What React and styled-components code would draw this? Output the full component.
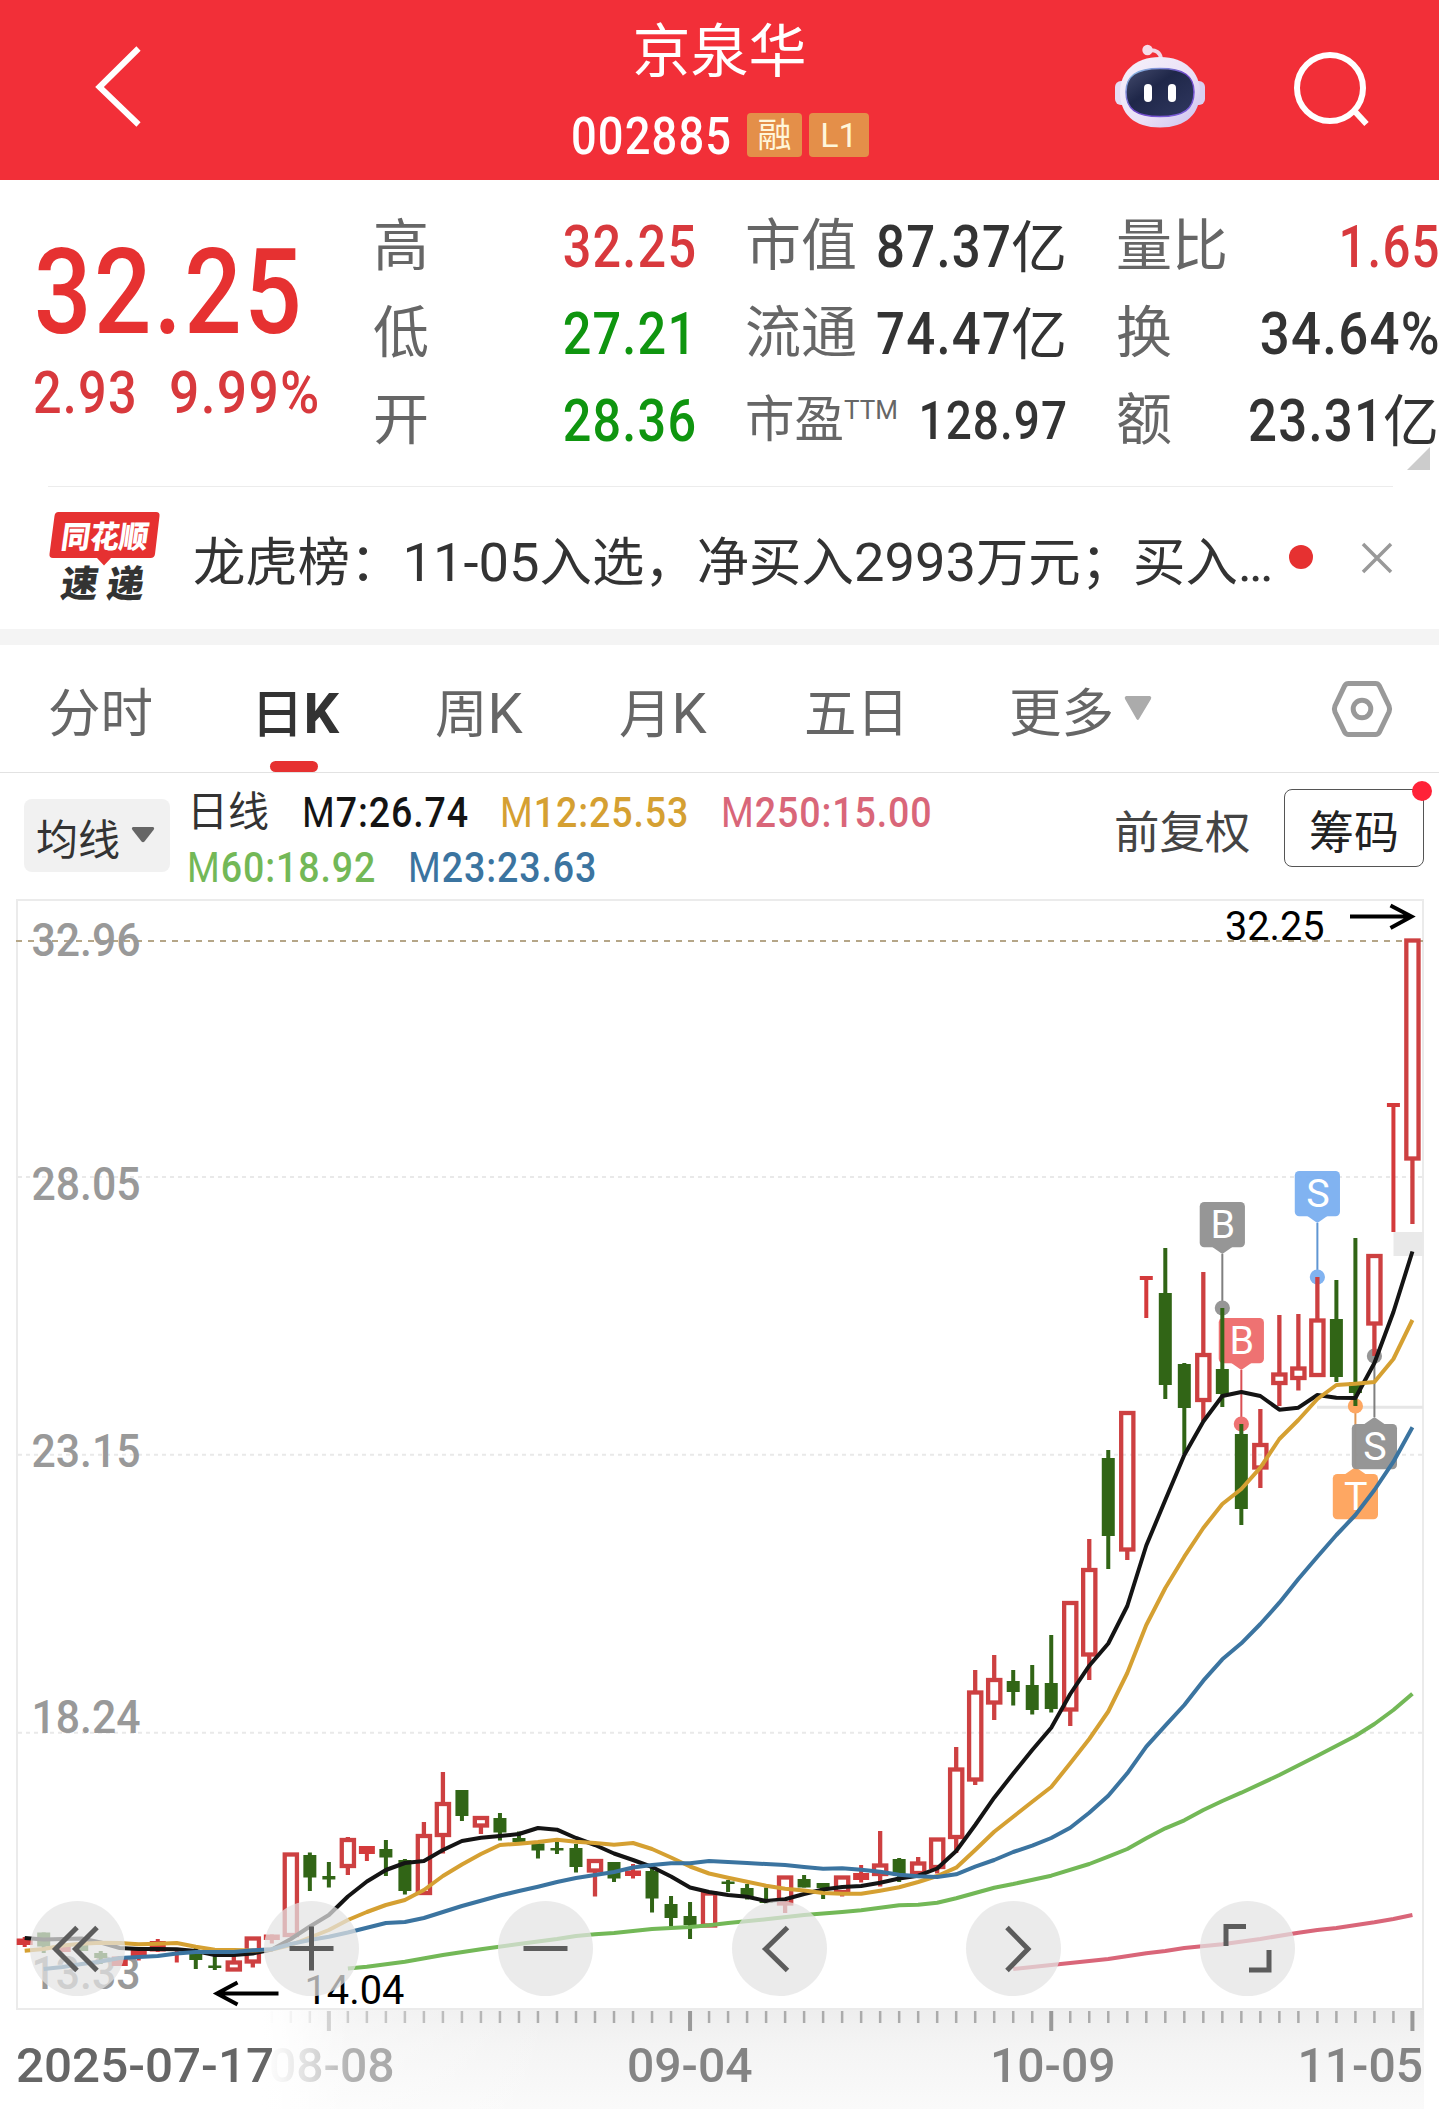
import React from "react";
import styled, { createGlobalStyle } from "styled-components";

const fontStack = `Roboto, "Noto Sans CJK SC", sans-serif`;

const c = {
  brand: "#f22f38",
  red: "#d8393d",
  green: "#0f950f",
  ink: "#333333",
  label: "#666666",
  ma7: "#141414",
  ma12: "#d5a032",
  ma23: "#3b74a0",
  ma60: "#73b857",
  ma250: "#d96679",
};

const GlobalStyle = createGlobalStyle`
  * { box-sizing: border-box; }
  body { margin: 0; background: #fff; }
`;

const Page = styled.main`
  width: 1439px;
  height: 2109px;
  overflow: hidden;
  background: #fff;
  color: ${c.ink};
  font-family: ${fontStack};
  display: flex;
  flex-direction: column;
  white-space: nowrap;
`;

/* Condensed numerals in the style of a DIN face */
const Num = styled.span`
  display: inline-block;
  font-size: ${(p) => p.$size}px;
  font-weight: ${(p) => p.$weight || 500};
  color: ${(p) => p.$color || "inherit"};
  letter-spacing: 0.024em;
  margin-right: -0.024em;
  margin-left: ${(p) => (p.$origin === "right" ? "-0.35em" : "0")};
  transform: scaleX(${(p) => p.$scale || 0.85});
  transform-origin: ${(p) => p.$origin || "left"} center;
`;

/* ---------- header ---------- */
const Header = styled.header`
  height: 180px;
  flex: none;
  background: ${c.brand};
  display: grid;
  grid-template-columns: 480px 479px 480px;
  color: #fff;
`;
const HeaderSide = styled.div`
  display: flex;
  align-items: flex-start;
  padding-left: ${(p) => p.$left}px;
  padding-top: ${(p) => p.$top}px;
  gap: 87px;
`;
const HeaderTitle = styled.div`
  display: flex;
  flex-direction: column;
  align-items: center;
`;
const StockName = styled.h1`
  margin: 0;
  font-size: 58px;
  font-weight: 400;
  line-height: 104px;
`;
const CodeRow = styled.div`
  display: flex;
  width: 299px;
  margin-top: 7px;
  margin-left: 2px;
  line-height: 51px;
`;
const Code = styled.div`
  width: 176px;
`;
const Badge = styled.span`
  width: ${(p) => p.$w}px;
  height: 44px;
  margin-top: 2px;
  margin-right: 7px;
  flex: none;
  border-radius: 4px;
  background: #e48f49;
  color: #fff6da;
  font-size: 34px;
  line-height: 45px;
  text-align: center;
`;

/* ---------- quote ---------- */
const Quote = styled.section`
  height: 306px;
  flex: none;
  display: grid;
  grid-template-columns: 373px 1066px;
  position: relative;
`;
const PriceBlock = styled.div`
  padding-left: 33px;
  color: ${c.red};
`;
const Price = styled.div`
  height: 140px;
  margin-top: 42px;
  padding-left: 1px;
  line-height: 140px;
  color: #e63131;
`;
const Change = styled.div`
  display: flex;
  line-height: 70px;
  margin-top: -4px;
`;
const ChangeCell = styled.div`
  width: ${(p) => p.$w}px;
`;
const Stats = styled.div`
  display: grid;
  grid-template-columns: 323px 322px 323px;
  grid-auto-rows: 87px;
  column-gap: 49px;
  padding-top: 23px;
`;
const Stat = styled.div`
  display: flex;
  justify-content: space-between;
  line-height: 87px;
  font-size: ${(p) => (p.$small ? 49.5 : 56)}px;
`;
const StatLabel = styled.span`
  color: ${c.label};
`;
const Sup = styled.sup`
  font-size: 26px;
  line-height: 0;
  vertical-align: 18px;
`;
const Corner = styled.i`
  position: absolute;
  left: 1407px;
  top: 267px;
  border-style: solid;
  border-width: 0 0 23px 23px;
  border-color: transparent transparent #cccccc transparent;
`;

/* ---------- news ---------- */
const News = styled.section`
  height: 143px;
  flex: none;
  margin: 0 46px 0 48px;
  border-top: 1px solid #ececec;
  display: flex;
`;
const NewsLogo = styled.div`
  width: 145px;
  padding-top: 23px;
  svg { overflow: visible; }
`;
const NewsText = styled.div`
  width: 1093px;
  font-size: 52.4px;
  line-height: 151px;
`;
const NewsNum = styled.span`
  font-size: 54.3px;
`;
const Ellipsis = styled.span`
  letter-spacing: -2.7px;
`;
const NewsDot = styled.i`
  width: 24px;
  height: 24px;
  margin: 58px 0 0 4px;
  border-radius: 50%;
  background: #e63131;
`;
const CloseBox = styled.div`
  margin: 55px 0 0 48px;
`;
const Band = styled.div`
  height: 16px;
  flex: none;
  background: #f4f4f4;
`;

/* ---------- period tabs ---------- */
const Tabs = styled.nav`
  height: 128px;
  flex: none;
  border-bottom: 1px solid #e2e2e2;
  display: flex;
  align-items: stretch;
  padding-left: 48px;
`;
const Tab = styled.div`
  width: ${(p) => p.$w}px;
  color: ${(p) => (p.$active ? c.ink : c.label)};
  font-size: 52.5px;
  font-weight: ${(p) => (p.$active ? 500 : 400)};
  line-height: 138px;
  display: flex;
  flex-direction: column;
  &::after {
    content: "";
    display: ${(p) => (p.$active ? "block" : "none")};
    width: 48px;
    height: 12px;
    margin: -23px 0 0 19px;
    border-radius: 6px;
    background: #e63131;
  }
`;
const K = styled.span`
  display: inline-block;
  font-weight: ${(p) => (p.$bold ? 700 : 400)};
  font-size: 56px;
`;
const Caret = styled.svg`
  display: block;
  flex: none;
`;
const MoreTab = styled.div`
  width: 321px;
  display: flex;
  gap: 10px;
  color: ${c.label};
  font-size: 52.5px;
  line-height: 138px;
  ${Caret} { margin-top: 51px; }
`;
const GearBox = styled.div`
  padding-top: 34px;
`;

/* ---------- moving-average legend ---------- */
const LegendBar = styled.section`
  height: 124px;
  flex: none;
  display: flex;
  padding-left: 24px;
`;
const MaButton = styled.div`
  width: 146px;
  height: 73px;
  margin-top: 26px;
  padding-left: 12px;
  border-radius: 8px;
  background: #f1f1f1;
  display: flex;
  gap: 11px;
  font-size: 42px;
  line-height: 83px;
  ${Caret} { margin-top: 28px; }
`;
const LegendRows = styled.div`
  width: 927px;
  margin-left: 17px;
  padding-top: 12px;
`;
const LegendRow = styled.div`
  display: flex;
  height: 55px;
  line-height: 55px;
  font-size: 41px;
`;
const LegendCell = styled.div`
  width: ${(p) => p.$w}px;
  color: ${(p) => p.$color};
`;
const MaLetter = styled.span`
  font-weight: 400;
`;
const Adjust = styled.div`
  width: 170px;
  font-size: 45.5px;
  line-height: 122px;
  color: #444444;
`;
const ChipButton = styled.div`
  position: relative;
  width: 140px;
  height: 78px;
  margin-top: 16px;
  border: 1.5px solid #555555;
  border-radius: 8px;
  font-size: 45px;
  line-height: 87px;
  text-align: center;
  color: #222222;
`;
const ChipDot = styled.i`
  position: absolute;
  right: -9px;
  top: -9px;
  width: 20px;
  height: 20px;
  border-radius: 50%;
  background: #ff2238;
`;

/* ---------- chart ---------- */
const ChartArea = styled.section`
  position: relative;
  height: 1113px;
  flex: none;
`;
const ChartSvg = styled.svg`
  display: block;
  font-family: ${fontStack};
`;
const Controls = styled.div`
  position: absolute;
  left: 30px;
  top: 1004px;
  display: flex;
  gap: 139px;
`;
const RoundButton = styled.div`
  width: 95px;
  height: 95px;
  border-radius: 50%;
  background: rgba(228, 228, 228, 0.725);
  svg { display: block; }
`;
const AxisArea = styled.section`
  position: relative;
  height: 99px;
  flex: none;
  width: 1424px;
  background: linear-gradient(180deg, #eeeeee 0, #f4f4f4 35px, #fafafa 99px);
`;
const AxisFade = styled.div`
  position: absolute;
  inset: 0;
  background:
    linear-gradient(90deg, #fff 0, #fff 262px, rgba(255,255,255,.86) 280px, rgba(255,255,255,.62) 300px, rgba(255,255,255,.3) 325px, rgba(255,255,255,0) 350px),
    linear-gradient(90deg, #fff 0, rgba(255,255,255,0) 560px);
`;
const FirstDate = styled.svg`
  position: absolute;
  left: 0;
  top: 0;
  font-family: ${fontStack};
`;

/* kind: r = hollow rise, f = solid rise, g = fall; then body top, body bottom, high, low */
const candles = [
  ["f", 1938.5, 1945, 1937, 1947], ["g", 1932.5, 1946.5, 1932.5, 1953], ["f", 1945, 1952, 1940, 1952],
  ["g", 1944, 1951, 1944, 1951], ["g", 1953, 1958, 1951, 1964], ["f", 1956.5, 1966, 1956, 1966],
  ["f", 1950, 1958, 1949, 1960.5], ["f", 1941, 1951.5, 1939, 1952], ["f", 1948, 1950, 1948, 1962.5],
  ["g", 1954, 1960, 1948, 1969], ["g", 1965.5, 1968, 1956, 1970], ["r", 1960.5, 1971.5, 1948.5, 1971.5],
  ["r", 1936.5, 1963.5, 1936.5, 1967.5], ["f", 1934.5, 1940, 1934.5, 1943.5], ["r", 1852.5, 1937, 1852.5, 1937],
  ["g", 1855, 1877.5, 1852.5, 1891], ["g", 1876, 1879.5, 1862, 1887.5], ["r", 1838, 1868, 1837, 1875],
  ["f", 1846, 1854, 1846, 1861], ["g", 1849, 1857.5, 1840, 1876], ["g", 1860, 1891, 1859, 1894.5],
  ["r", 1834, 1895, 1822, 1895], ["r", 1802, 1837, 1772, 1853.5], ["g", 1790, 1816, 1790, 1821],
  ["r", 1816, 1827.5, 1816, 1834], ["g", 1818, 1832.5, 1813, 1840.5], ["g", 1838, 1842, 1831.5, 1842],
  ["g", 1843.5, 1850.5, 1843, 1858.5], ["g", 1848, 1850.5, 1838, 1854], ["g", 1848, 1867, 1844, 1872.5],
  ["r", 1859, 1872.5, 1859, 1896.5], ["g", 1862, 1878.5, 1862, 1882], ["f", 1870.5, 1876, 1864, 1878.5],
  ["g", 1871, 1898.5, 1868, 1912.5], ["g", 1904, 1918, 1896, 1926.5], ["g", 1916, 1925, 1902, 1939],
  ["r", 1891.5, 1927.5, 1891.5, 1927.5], ["g", 1881.5, 1884, 1880, 1892], ["g", 1888, 1897, 1884, 1899.5],
  ["g", 1901, 1903, 1887.5, 1903.5], ["r", 1875.5, 1905.5, 1875.5, 1913], ["g", 1879, 1887.5, 1875, 1887.5],
  ["g", 1883, 1888, 1883, 1899], ["r", 1875.5, 1894, 1875.5, 1896.5], ["f", 1873, 1880, 1865, 1882.5],
  ["r", 1863.5, 1876, 1831, 1886.5], ["g", 1859, 1875.5, 1858, 1882], ["r", 1861.5, 1875, 1857, 1875],
  ["r", 1837.5, 1869, 1837.5, 1873.5], ["r", 1767.5, 1839, 1747, 1853], ["r", 1690.5, 1781.5, 1670, 1785],
  ["r", 1678, 1704.5, 1655, 1720], ["g", 1681, 1692, 1670, 1705.5], ["g", 1685, 1710, 1665, 1714.5],
  ["g", 1683, 1709, 1635, 1712.5], ["r", 1601, 1711.5, 1601, 1726], ["r", 1568, 1656.5, 1539, 1680],
  ["g", 1458, 1536, 1450, 1569], ["r", 1411, 1551.5, 1411, 1560], ["f", 1276, 1280, 1276, 1318],
  ["g", 1293, 1385, 1248, 1399], ["g", 1364, 1408, 1363, 1454], ["r", 1353, 1402, 1272, 1421],
  ["g", 1369, 1394, 1308, 1407], ["g", 1434, 1509, 1424, 1525], ["r", 1443, 1469.5, 1409, 1488],
  ["r", 1372.5, 1385, 1315, 1406], ["r", 1366.5, 1380, 1314, 1390.5], ["r", 1318.5, 1377, 1277, 1377],
  ["g", 1319, 1377, 1280, 1382], ["g", 1382.5, 1393, 1238, 1406], ["r", 1254, 1325.5, 1254, 1356],
  ["f", 1103, 1107, 1103, 1232], ["r", 938.5, 1160.5, 938.5, 1224],
];

const xAt = (i) => 24.7 + 19.01 * i;

const consecutive = (start, ys) => ys.map((y, k) => [start + k, y]);

const ma7 = consecutive(0, [
  1938, 1939.5, 1939, 1938.5, 1942.5, 1948, 1949, 1949, 1949.3, 1951, 1955, 1955, 1953.5, 1949.5, 1939, 1926.5,
  1915, 1896.5, 1881.5, 1870, 1863, 1861, 1850, 1841, 1837.7, 1836, 1834, 1828, 1829.7, 1838, 1845, 1853.5,
  1860, 1867, 1876.5, 1887.5, 1892, 1895, 1896.7, 1901, 1899.3, 1894, 1889.5, 1887, 1886, 1882.7, 1878.5,
  1875.7, 1868.5, 1851, 1825, 1797.7, 1773.5, 1750, 1727.7, 1694, 1665.7, 1643.5, 1606, 1545.5, 1500, 1455,
  1421.5, 1396, 1392, 1396, 1409.7, 1407.7, 1395, 1397.7, 1398, 1363, 1312, 1251.5,
]);
const ma12 = consecutive(0, [
  1950.7, 1949, 1945.5, 1943.7, 1942.7, 1943, 1944.3, 1943.7, 1943, 1946.7, 1949.7, 1950, 1950.5, 1949.5,
  1945, 1937.5, 1930, 1920, 1912, 1905, 1900, 1890, 1876, 1864.5, 1854, 1845, 1843.7, 1842, 1839.7, 1841.7,
  1843, 1844.7, 1843, 1849, 1857.5, 1866.5, 1873.5, 1877.7, 1881.7, 1885.7, 1888.7, 1890.5, 1893, 1893.7,
  1893.7, 1890.7, 1887.3, 1882, 1876, 1867.7, 1850, 1831.7, 1816.7, 1801.7, 1787, 1763.3, 1739, 1711.5, 1673,
  1625, 1588, 1556.7, 1528, 1504, 1489, 1467.7, 1439, 1420, 1399, 1385, 1383.7, 1382, 1359, 1320,
]);
const ma23 = consecutive(1, [
  1969, 1967, 1964, 1961.5, 1958, 1957, 1956, 1953.5, 1952, 1952, 1952, 1950.3, 1949.3, 1944, 1940, 1936.7,
  1932.5, 1927.7, 1923, 1922, 1918, 1912, 1906, 1900.7, 1895.5, 1891, 1886.7, 1882, 1878, 1875, 1872, 1867.5,
  1865, 1863.3, 1863.3, 1861, 1862, 1863, 1864, 1865, 1867, 1868.7, 1868.3, 1869.7, 1871.7, 1874.7, 1876.3,
  1877, 1874.3, 1866.7, 1860, 1852, 1845.7, 1838, 1827.7, 1812.7, 1795.7, 1773.3, 1746.7, 1725.7, 1705,
  1680.7, 1659.3, 1643.3, 1624, 1602.7, 1579, 1556.7, 1535, 1515, 1490, 1461.7, 1427.3,
]);
const ma60 = [
  [17, 1968.5], [18, 1966.7], [20, 1961.7], [22, 1955], [24, 1949.3], [26, 1944], [28, 1939], [29, 1936],
  [30, 1934.3], [31, 1933], [33, 1929], [35, 1927], [36, 1925.3], [37, 1923], [39, 1919.3], [41, 1915],
  [43, 1912], [44, 1910.3], [46, 1905.3], [47, 1904.7], [48, 1902.7], [49, 1898.3], [50, 1893], [51, 1887.7],
  [52, 1884], [54, 1875.7], [56, 1864], [57, 1856.7], [58, 1849], [59, 1838.3], [60, 1828.3], [61, 1820.3],
  [62, 1810], [63, 1801], [64, 1792.7], [66, 1775], [68, 1755.7], [70, 1736], [71, 1724], [72, 1710], [73, 1693.7],
];
const ma250 = [
  [52, 1969], [54, 1965], [57, 1959], [59, 1953.3], [60, 1951], [61, 1948], [63, 1944.3], [65, 1939],
  [67, 1932.7], [68, 1930], [69, 1928], [71, 1922.3], [72, 1919], [73, 1915],
];
const toPoints = (pts) => pts.map(([i, y]) => `${xAt(i)},${y}`).join(" ");

const gridRows = [1177, 1454.7, 1732.8];
const priceLabels = [
  ["32.96", 955.5], ["28.05", 1199.5], ["23.15", 1467], ["18.24", 1732.5], ["13.33", 1989],
];

/* slot, label, fill, anchor dot y, box top, stem colour */
const markers = [
  [63, "B", "#939393", 1308, 1202, "#7c7c7c"],
  [68, "S", "#7db1f1", 1277, 1171, "#5b93d2"],
  [64, "B", "#ee6e6e", 1424, 1318, "#d84a4e"],
  [70, "T", "#fea55d", 1406, 1474, "#e0944f"],
  [71, "S", "#939393", 1356, 1424, "#7c7c7c"],
];

function Marker({ data }) {
  const [i, label, fill, dotY, top, stem] = data;
  const x = xAt(i);
  const above = top < dotY;
  const tip = above ? top + 52 : top - 7;
  const base = above ? top + 45 : top;
  return (
    <g opacity="0.97">
      <line x1={x} x2={x} y1={tip} y2={dotY} stroke={stem} strokeWidth="2" />
      <circle cx={x} cy={dotY} r="7.6" fill={fill} />
      <rect x={x - 22.6} y={top} width="45.2" height="45.2" rx="4.5" fill={fill} />
      <path d={`M${x - 10} ${base} L${x} ${tip} L${x + 10} ${base} Z`} fill={fill} />
      <text x={x + 0.5} y={top + 36} fontSize="39.5" fill="#fff" textAnchor="middle">{label}</text>
    </g>
  );
}

function Candle({ i, data }) {
  const [kind, top, bottom, high, low] = data;
  const x = xAt(i);
  if (kind === "r") {
    return (
      <g stroke="#cd4041" strokeWidth="4.3" fill="none">
        {high < top && <line x1={x} x2={x} y1={high} y2={top + 1} />}
        {low > bottom && <line x1={x} x2={x} y1={bottom - 1} y2={low} />}
        <rect x={x - 6.1} y={top + 2} width="12.2" height={Math.max(bottom - top - 4, 1)} />
      </g>
    );
  }
  const color = kind === "g" ? "#316516" : "#d43a3b";
  const half = kind === "f" && bottom - top > 4.5 ? 8 : 6.5;
  return (
    <g fill={color}>
      <rect x={x - 2} y={high} width="4" height={low - high} />
      <rect x={x - half} y={top} width={half * 2} height={bottom - top} />
    </g>
  );
}

function Chart() {
  return (
    <ChartSvg width="1439" height="1113" viewBox="0 897 1439 1113">
      <rect x="17" y="900" width="1406" height="1109" fill="none" stroke="#ebebeb" strokeWidth="2" />
      {gridRows.map((y) => (
        <line key={y} x1="18" x2="1422" y1={y} y2={y} stroke="#e9e9e9" strokeWidth="2" strokeDasharray="4 4" />
      ))}
      <line x1="16" x2="1423" y1="941" y2="941" stroke="#b5a688" strokeWidth="2" strokeDasharray="6 6" />
      {priceLabels.map(([text, y]) => (
        <text key={text} x="31.500" y={y} fontSize="46.500" fontWeight="500" fill="#999" textLength="109" lengthAdjust="spacingAndGlyphs">
          {text}
        </text>
      ))}
      <rect x="1393.500" y="1232" width="30" height="24" fill="#e9e9e9" />
      <line x1="1317" x2="1423" y1="1407.300" y2="1407.300" stroke="#e6e6e6" strokeWidth="3" />
      {markers.map((m) => <Marker key={m[0]} data={m} />)}
      {candles.map((d, i) => <Candle key={i} i={i} data={d} />)}
      <g fill="none" strokeWidth="4" strokeLinejoin="round">
        <polyline points={toPoints(ma7)} stroke={c.ma7} />
        <polyline points={toPoints(ma12)} stroke={c.ma12} />
        <polyline points={toPoints(ma250)} stroke={c.ma250} />
        <polyline points={toPoints(ma60)} stroke={c.ma60} />
        <polyline points={toPoints(ma23)} stroke={c.ma23} />
      </g>
      <g stroke="#000" strokeWidth="4" fill="none">
        <path d="M1350 916.500 H1411 M1390.500 905.500 L1411.500 916.500 L1390.500 928" />
        <path d="M278.500 1993.500 H217 M237.500 1982.500 L217 1993.500 L237.500 2004.500" />
      </g>
      <text x="1225" y="940" fontSize="41" fill="#000" textLength="99.500" lengthAdjust="spacingAndGlyphs">32.25</text>
      <text x="304.500" y="2004" fontSize="41" fill="#000" textLength="100" lengthAdjust="spacingAndGlyphs">14.04</text>
    </ChartSvg>
  );
}

const controlIcons = [
  "M47 26.500 L25.500 48 L47 69.500 M67 26.500 L45.500 48 L67 69.500",
  "M25.500 47.500 H69.500 M47.500 25.500 V69.500",
  "M25.500 47.500 H69.500",
  "M55.500 26.500 L33.500 48 L55.500 69.500",
  "M41 26.500 L62 48 L41 69.500",
  "M26 45 V25.500 H46 M69 49 V69 H49",
];

const dateTicks = [[16, "08-08", 269], [35, "09-04", 627], [54, "10-09", 990], [73, "11-05", 1297.5]];
const majorSlots = dateTicks.map((d) => d[0]);

function Axis() {
  return (
    <AxisArea>
      <ChartSvg width="1424" height="99" viewBox="0 2010 1424 99">
        {candles.map((_, i) => {
          const major = majorSlots.includes(i);
          return (
            <rect key={i} x={xAt(i) - (major ? 2 : 1.25)} y="2011" width={major ? 4 : 2.5} height={major ? 20 : 12}
              fill={major ? "#999" : "#ababab"} />
          );
        })}
        {dateTicks.map(([, text, x]) => (
          <text key={text} x={x} y="2081.500" fontSize="48" fontWeight="500" fill="#848484" textLength="125.500" lengthAdjust="spacingAndGlyphs">
            {text}
          </text>
        ))}
      </ChartSvg>
      <AxisFade />
      <FirstDate width="300" height="99" viewBox="0 2010 300 99">
        <text x="16" y="2081.500" fontSize="48" fontWeight="500" fill="#666" textLength="258" lengthAdjust="spacingAndGlyphs">
          2025-07-17
        </text>
      </FirstDate>
    </AxisArea>
  );
}

function Robot() {
  return (
    <svg width="92" height="86" viewBox="1114 43 92 86">
      <defs>
        <linearGradient id="shell" x1="0" y1="0" x2="1" y2="1">
          <stop offset="0" stopColor="#f6f2fb" />
          <stop offset="0.6" stopColor="#eadff6" />
          <stop offset="1" stopColor="#c9c0ee" />
        </linearGradient>
        <linearGradient id="rim" x1="0" y1="0" x2="1" y2="1">
          <stop offset="0" stopColor="#8fd0e6" />
          <stop offset="0.5" stopColor="#6f45c8" />
          <stop offset="1" stopColor="#7d63dd" />
        </linearGradient>
        <linearGradient id="visor" x1="0" y1="0" x2="1" y2="1">
          <stop offset="0" stopColor="#454c6e" />
          <stop offset="0.4" stopColor="#1f2749" />
          <stop offset="1" stopColor="#303860" />
        </linearGradient>
      </defs>
      <path d="M1148 50.500 Q1160 49 1161 59" fill="none" stroke="#f3d6e6" strokeWidth="4" />
      <circle cx="1147.500" cy="50" r="5.200" fill="#f6dcea" />
      <rect x="1115" y="81" width="13" height="24" rx="6" fill="#e6dcf4" />
      <rect x="1192" y="81" width="13" height="24" rx="6" fill="#d9cff0" />
      <path d="M1160 57 C1186 57 1200 73 1200 92 C1200 114 1186 127.500 1160 127.500 C1134 127.500 1120 114 1120 92 C1120 73 1134 57 1160 57Z" fill="url(#shell)" />
      <path d="M1160 68.500 C1184 68.500 1194 76 1194 92 C1194 109 1184 116.500 1160 116.500 C1136 116.500 1126 109 1126 92 C1126 76 1136 68.500 1160 68.500Z" fill="url(#visor)" stroke="url(#rim)" strokeWidth="1.500" />
      <rect x="1144" y="84" width="8" height="18" rx="4" fill="#fff" />
      <rect x="1168" y="84" width="8" height="18" rx="4" fill="#fff" />
    </svg>
  );
}

function Logo() {
  return (
    <svg width="114" height="104" viewBox="48 510 114 104" fontFamily={`"Noto Sans CJK SC", sans-serif`}>
      <path d="M58.500 512 H156 Q160 512 159.500 516 L155 554 Q154.500 558 150.500 558 H111 L104 565.500 L97 558 H53 Q49 558 49.500 554 L54.500 516 Q55 512 58.500 512Z" fill="#e63131" />
      <g transform="skewX(-8)">
        <text x="137" y="548" fontSize="31" fontWeight="900" fill="#fff" textLength="87" lengthAdjust="spacingAndGlyphs">同花顺</text>
        <text x="143.500" y="597.500" fontSize="37" fontWeight="900" fill="#333" textLength="83">速递</text>
      </g>
    </svg>
  );
}

const Legend = ({ w, color, name, value }) => (
  <LegendCell $w={w} $color={color}>
    <Num $size={43} $scale={0.873}>
      <MaLetter>M</MaLetter>{name}:{value}
    </Num>
  </LegendCell>
);

export default function App() {
  return (
    <>
      <GlobalStyle />
      <Page>
        <Header>
          <HeaderSide $left={92} $top={44}>
            <svg width="54" height="88" viewBox="92 44 54 88" fill="none" stroke="#fff" strokeWidth="6">
              <path d="M138.500 48.500 L99.500 87 L138.500 124.500" />
            </svg>
          </HeaderSide>
          <HeaderTitle>
            <StockName>京泉华</StockName>
            <CodeRow>
              <Code><Num $size={51.5} $scale={0.88}>002885</Num></Code>
              <Badge $w={55}>融</Badge>
              <Badge $w={60}>L1</Badge>
            </CodeRow>
          </HeaderTitle>
          <HeaderSide $left={155} $top={43}>
            <Robot />
            <svg width="80" height="86" viewBox="1293 43 80 86" fill="none" stroke="#fff" strokeWidth="6">
              <circle cx="1330" cy="88" r="33" />
              <path d="M1354.500 111 L1366.500 124" />
            </svg>
          </HeaderSide>
        </Header>

        <Quote>
          <PriceBlock>
            <Price><Num $size={119.5} $scale={0.846}>32.25</Num></Price>
            <Change>
              <ChangeCell $w={136}><Num $size={60} $scale={0.84}>2.93</Num></ChangeCell>
              <ChangeCell $w={160}><Num $size={60} $scale={0.89}>9.99%</Num></ChangeCell>
            </Change>
          </PriceBlock>
          <Stats>
            <Stat><StatLabel>高</StatLabel><Num $size={60} $scale={0.84} $origin="right" $color={c.red}>32.25</Num></Stat>
            <Stat><StatLabel>市值</StatLabel><span><Num $size={60} $origin="right">87.37</Num>亿</span></Stat>
            <Stat><StatLabel>量比</StatLabel><Num $size={60} $scale={0.82} $origin="right" $color={c.red}>1.65</Num></Stat>
            <Stat><StatLabel>低</StatLabel><Num $size={60} $scale={0.84} $origin="right" $color={c.green}>27.21</Num></Stat>
            <Stat><StatLabel>流通</StatLabel><span><Num $size={60} $origin="right">74.47</Num>亿</span></Stat>
            <Stat><StatLabel>换</StatLabel><Num $size={60} $scale={0.88} $origin="right">34.64%</Num></Stat>
            <Stat><StatLabel>开</StatLabel><Num $size={60} $scale={0.84} $origin="right" $color={c.green}>28.36</Num></Stat>
            <Stat $small><StatLabel>市盈<Sup>TTM</Sup></StatLabel><Num $size={54} $origin="right">128.97</Num></Stat>
            <Stat><StatLabel>额</StatLabel><span><Num $size={60} $origin="right">23.31</Num>亿</span></Stat>
          </Stats>
          <Corner />
        </Quote>

        <News>
          <NewsLogo><Logo /></NewsLogo>
          <NewsText>
            龙虎榜：<NewsNum>11-05</NewsNum>入选，净买入<NewsNum>2993</NewsNum>万元；买入<Ellipsis>...</Ellipsis>
          </NewsText>
          <NewsDot />
          <CloseBox>
            <svg width="32" height="32" viewBox="0 0 32 32" fill="none" stroke="#999" strokeWidth="3.500">
              <path d="M2 2 L30 30 M30 2 L2 30" />
            </svg>
          </CloseBox>
        </News>
        <Band />

        <Tabs>
          <Tab $w={203}>分时</Tab>
          <Tab $w={184} $active><span>日<K $bold>K</K></span></Tab>
          <Tab $w={184}><span>周<K>K</K></span></Tab>
          <Tab $w={185}><span>月<K>K</K></span></Tab>
          <Tab $w={205}>五日</Tab>
          <MoreTab>
            更多
            <Caret width="28" height="25" viewBox="0 0 28 25"><path d="M2 0 H26 Q28 1 27 3 L15 23 Q14 25 12.500 23 L1 3 Q0 1 2 0Z" fill="#ababab" /></Caret>
          </MoreTab>
          <GearBox>
            <svg width="64" height="60" viewBox="-32 -30 64 60" fill="none" stroke="#999" strokeWidth="5">
              <path d="M-13.500 -25.500 H13.500 Q16 -25.500 17.300 -23.300 L27 -3 Q28.200 0 27 3 L17.300 23.300 Q16 25.500 13.500 25.500 H-13.500 Q-16 25.500 -17.300 23.300 L-27 3 Q-28.200 0 -27 -3 L-17.300 -23.300 Q-16 -25.500 -13.500 -25.500Z" />
              <circle r="8.800" />
            </svg>
          </GearBox>
        </Tabs>

        <LegendBar>
          <MaButton>
            均线
            <Caret width="24" height="16" viewBox="0 0 24 16"><path d="M2 0 H22 Q24 1 22.500 3 L13.500 14.500 Q12 16 10.500 14.500 L1.500 3 Q0 1 2 0Z" fill="#666" /></Caret>
          </MaButton>
          <LegendRows>
            <LegendRow>
              <LegendCell $w={115} $color={c.ink}>日线</LegendCell>
              <Legend w={198} color={c.ma7} name="7" value="26.74" />
              <Legend w={221} color={c.ma12} name="12" value="25.53" />
              <Legend w={230} color={c.ma250} name="250" value="15.00" />
            </LegendRow>
            <LegendRow>
              <Legend w={221} color={c.ma60} name="60" value="18.92" />
              <Legend w={220} color={c.ma23} name="23" value="23.63" />
            </LegendRow>
          </LegendRows>
          <Adjust>前复权</Adjust>
          <ChipButton>筹码<ChipDot /></ChipButton>
        </LegendBar>

        <ChartArea>
          <Chart />
          <Controls>
            {controlIcons.map((d) => (
              <RoundButton key={d}>
                <svg width="95" height="95" viewBox="0 0 95 95" fill="none" stroke="#5c5c5c" strokeWidth="5">
                  <path d={d} />
                </svg>
              </RoundButton>
            ))}
          </Controls>
        </ChartArea>
        <Axis />
      </Page>
    </>
  );
}
